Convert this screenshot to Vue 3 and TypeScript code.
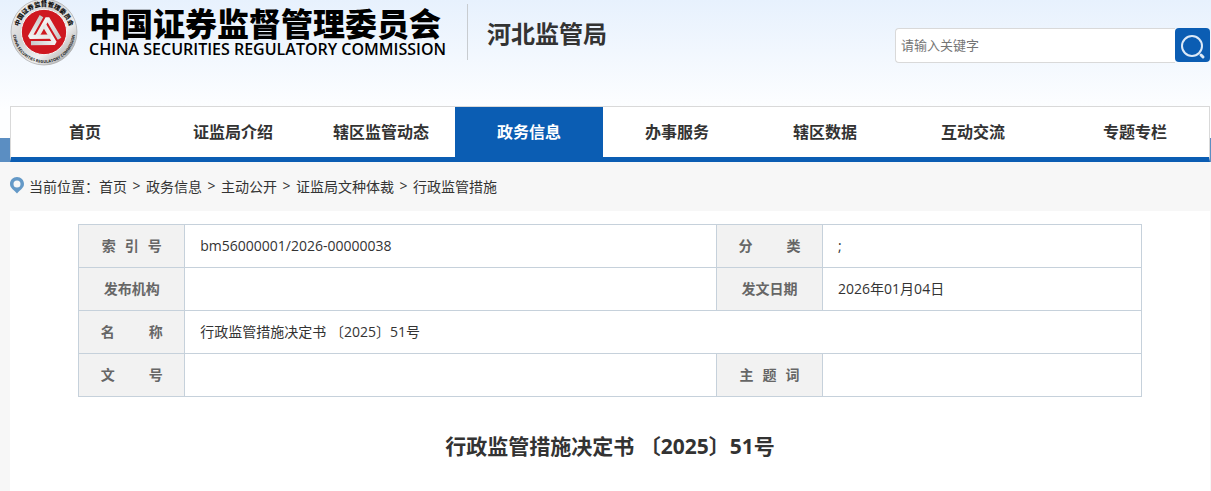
<script setup lang="ts">
interface NavItem {
  label: string
  active?: boolean
}

const navItems: NavItem[] = [
  { label: '首页' },
  { label: '证监局介绍' },
  { label: '辖区监管动态' },
  { label: '政务信息', active: true },
  { label: '办事服务' },
  { label: '辖区数据' },
  { label: '互动交流' },
  { label: '专题专栏' },
]

const crumbs: string[] = ['首页', '政务信息', '主动公开', '证监局文种体裁', '行政监管措施']

const title = '行政监管措施决定书 〔2025〕51号'
</script>

<template>
  <div class="page">
    <header class="header">
      <div class="masthead">
        <a class="brand" href="#">
          <svg class="seal" viewBox="0 0 204 204" aria-hidden="true">
            <defs>
              <linearGradient id="silver" x1="0" y1="0" x2="1" y2="1">
                <stop offset="0" stop-color="#fafafa" />
                <stop offset="0.4" stop-color="#d2d2d2" />
                <stop offset="0.65" stop-color="#f0f0f0" />
                <stop offset="1" stop-color="#8c8c8c" />
              </linearGradient>
              <linearGradient id="steel" x1="0" y1="0" x2="1" y2="1">
                <stop offset="0" stop-color="#ffffff" />
                <stop offset="1" stop-color="#c8c8c8" />
              </linearGradient>
              <path id="arc-top" d="M25 102 A77 77 0 0 1 179 102" />
              <path id="arc-bottom" d="M9 102 A93 93 0 0 0 195 102" />
            </defs>
            <circle cx="102" cy="102" r="99" fill="url(#silver)" stroke="#a5a5a5" stroke-width="2" />
            <circle cx="102" cy="102" r="68" fill="#cf1820" stroke="#f5f5f5" stroke-width="3" />
            <g transform="translate(102 104) scale(1.14) translate(-63 -66)" fill="none" stroke="url(#steel)" stroke-width="11" stroke-linejoin="bevel">
              <path d="M45 76 L72 28 L104 82" />
              <path d="M45 76 L72 28 L104 82" transform="rotate(120 63 66)" />
              <path d="M45 76 L72 28 L104 82" transform="rotate(240 63 66)" />
            </g>
            <text class="seal-zh"><textPath href="#arc-top" startOffset="50%" text-anchor="middle">中国证券监督管理委员会</textPath></text>
            <text class="seal-en"><textPath href="#arc-bottom" startOffset="50%" text-anchor="middle">CHINA SECURITIES REGULATORY COMMISSION</textPath></text>
          </svg>
          <span class="wordmark">
            <span class="wordmark-zh">中国证券监督管理委员会</span>
            <span class="wordmark-en">CHINA SECURITIES REGULATORY COMMISSION</span>
          </span>
        </a>
        <a class="bureau" href="#">河北监管局</a>
        <form class="search" @submit.prevent>
          <input class="search-input" type="text" placeholder="请输入关键字" aria-label="请输入关键字" />
          <button class="search-button" type="submit" aria-label="搜索">
            <svg viewBox="0 0 35 34" aria-hidden="true">
              <circle cx="17" cy="18" r="10" fill="none" stroke="#dce9f7" stroke-width="2" />
              <path d="M26 27 L28 29" stroke="#dce9f7" stroke-width="3" stroke-linecap="round" />
            </svg>
          </button>
        </form>
      </div>
      <div class="nav-band">
        <nav class="nav">
          <a v-for="item in navItems" :key="item.label" href="#" class="nav-item" :class="{ active: item.active }">{{ item.label }}</a>
        </nav>
      </div>
    </header>

    <nav class="crumbs">
      <svg class="pin" viewBox="0 0 14 17" aria-hidden="true">
        <path fill-rule="evenodd" fill="#6499c7" d="M7 0 C11 0 14 3 14 7 C14 11 10 13 7 16.500 C4 13 0 11 0 7 C0 3 3 0 7 0 Z M7 3.500 A3.500 3.500 0 1 0 7 10.500 A3.500 3.500 0 1 0 7 3.500 Z" />
      </svg>
      <span>当前位置：</span>
      <template v-for="(crumb, i) in crumbs" :key="crumb">
        <span v-if="i > 0" class="sep">&gt;</span>
        <a href="#">{{ crumb }}</a>
      </template>
    </nav>

    <main class="content">
      <table class="info">
        <colgroup>
          <col class="col-label" />
          <col class="col-wide" />
          <col class="col-label" />
          <col />
        </colgroup>
        <tbody>
          <tr>
            <th scope="row"><span class="spread three"><i>索</i><i>引</i><i>号</i></span></th>
            <td>bm56000001/2026-00000038</td>
            <th scope="row"><span class="spread two"><i>分</i><i>类</i></span></th>
            <td>;</td>
          </tr>
          <tr>
            <th scope="row">发布机构</th>
            <td></td>
            <th scope="row">发文日期</th>
            <td>2026年01月04日</td>
          </tr>
          <tr>
            <th scope="row"><span class="spread two"><i>名</i><i>称</i></span></th>
            <td colspan="3">{{ title }}</td>
          </tr>
          <tr>
            <th scope="row"><span class="spread two"><i>文</i><i>号</i></span></th>
            <td></td>
            <th scope="row"><span class="spread three"><i>主</i><i>题</i><i>词</i></span></th>
            <td></td>
          </tr>
        </tbody>
      </table>
      <h1 class="title">{{ title }}</h1>
    </main>
  </div>
</template>

<style>
body {
  background: #f7f7f7;
}
</style>

<style scoped>
.page {
  box-sizing: border-box;
  min-height: 100vh;
  display: flex;
  flex-direction: column;
  font-family: "Open Sans", "Noto Sans CJK SC", sans-serif;
  font-size: 14px;
  color: #333;
}
a {
  color: inherit;
  text-decoration: none;
}
.header {
  background: linear-gradient(#e7f1fd 0, #fdfeff 110px);
}
.masthead {
  display: flex;
  align-items: flex-start;
  height: 106px;
  padding: 0 1px 0 10px;
}
.brand {
  display: flex;
  color: #000;
}
.seal {
  width: 68px;
  height: 68px;
  margin-top: -2px;
}
.seal-zh {
  font-family: "Noto Sans CJK SC", sans-serif;
  font-size: 19px;
  font-weight: 900;
  fill: #111;
}
.seal-en {
  font-family: "Open Sans", sans-serif;
  font-size: 12px;
  font-weight: 700;
  fill: #222;
}
.wordmark {
  display: flex;
  flex-direction: column;
  margin: 5px 0 0 11px;
  white-space: nowrap;
}
.wordmark-zh {
  font-family: "Noto Sans CJK SC", sans-serif;
  font-size: 32px;
  font-weight: 900;
  line-height: 34px;
}
.wordmark-en {
  font-size: 16px;
  font-weight: 600;
  line-height: 20px;
}
.bureau {
  height: 56px;
  margin: 4px 0 0 21px;
  padding-left: 19px;
  border-left: 1px solid #c8ccd0;
  font-size: 24px;
  font-weight: 700;
  line-height: 60px;
  white-space: nowrap;
}
.search {
  display: flex;
  margin: 28px 0 0 auto;
}
.search-input {
  box-sizing: border-box;
  width: 280px;
  height: 35px;
  padding: 0 5px 2px;
  border: 1px solid #d9d9d9;
  border-right: 0;
  border-radius: 4px 0 0 4px;
  background: #fff;
  font: inherit;
  font-size: 13px;
  color: #333;
}
.search-input::placeholder {
  color: #757575;
}
.search-button {
  width: 35px;
  height: 34px;
  padding: 0;
  border: 0;
  border-radius: 4px;
  background: #0b5db3;
}
.search-button svg {
  display: block;
  width: 35px;
  height: 34px;
}
.nav-band {
  padding: 0 1px 0 10px;
  background: linear-gradient(#5b8ec2, #5b8ec2) left bottom / 100% 24px no-repeat;
}
.nav {
  display: flex;
  border: 1px solid #d9d9d9;
  border-bottom: 5px solid #0b5db3;
  background: #fff;
}
.nav-item {
  flex: 0 1 148px;
  font-size: 16px;
  font-weight: 700;
  line-height: 50px;
  text-align: center;
  white-space: nowrap;
}
.nav-item:last-child {
  margin-left: auto;
}
.nav-item.active {
  background: #0b5db3;
  color: #fff;
}
.crumbs {
  box-sizing: border-box;
  display: flex;
  align-items: center;
  height: 49px;
  padding: 0 10px 2px;
}
.pin {
  width: 14px;
  height: 17px;
  margin-right: 5px;
}
.sep {
  width: 19px;
  text-align: center;
}
.content {
  flex: 1;
  margin: 0 1px 0 10px;
  padding: 13px 68px 24px;
  background: #fff;
}
.info {
  width: 100%;
  table-layout: fixed;
  border-collapse: collapse;
}
.col-label {
  width: 10%;
}
.col-wide {
  width: 50%;
}
.info th,
.info td {
  height: 42px;
  padding: 0;
  border: 1px solid #c6d1db;
  line-height: 20px;
}
.info th {
  background: #f2f2f2;
  color: #666;
  font-weight: 700;
  text-align: center;
}
.info td {
  padding-left: 15px;
}
.spread {
  display: inline-flex;
  justify-content: space-between;
}
.spread i {
  font-style: normal;
}
.spread.two {
  width: 62px;
}
.spread.three {
  width: 60px;
}
.title {
  margin: 33px 0 0;
  font-size: 21px;
  font-weight: 700;
  line-height: 32px;
  text-align: center;
}
</style>
